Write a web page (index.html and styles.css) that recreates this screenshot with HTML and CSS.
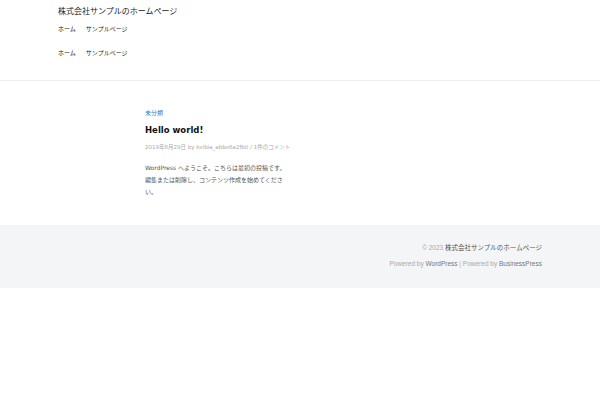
FILE: index.html
```html
<!DOCTYPE html>
<html lang="ja">
<head>
<meta charset="utf-8">
<title>Hello world!</title>
<link rel="stylesheet" href="styles.css">
</head>
<body>
<header class="site-header">
  <div class="container">
    <div class="site-title">株式会社サンプルのホームページ</div>
    <nav class="nav">
      <div class="nav-row"><a class="nav-link">ホーム</a><a class="nav-link">サンプルページ</a></div>
      <div class="nav-row"><a class="nav-link">ホーム</a><a class="nav-link">サンプルページ</a></div>
    </nav>
  </div>
</header>
<main class="site-main">
  <article class="post">
    <div class="post-cat">未分類</div>
    <h2 class="post-title">Hello world!</h2>
    <div class="post-meta">2019年6月29日 by kelbia_abbe6a2fb0 / 1件のコメント</div>
    <p class="post-excerpt">WordPress へようこそ。こちらは最初の投稿です。編集または削除し、コンテンツ作成を始めてください。</p>
  </article>
</main>
<footer class="site-footer">
  <div class="container footer-inner">
    <div class="copyright">© 2023 <span class="copy-name">株式会社サンプルのホームページ</span></div>
    <div class="powered">Powered by <span class="plink">WordPress</span> | Powered by <span class="plink">BusinessPress</span></div>
  </div>
</footer>
</body>
</html>
```
FILE: styles.css
```css
html, body {
  margin: 0;
  padding: 0;
  background: #ffffff;
}
body {
  font-family: "DejaVu Sans", "Noto Sans CJK JP", sans-serif;
  color: #333;
}
.container {
  padding: 0 58px;
}
.site-header {
  height: 80px;
  border-bottom: 1px solid #efefef;
}
.site-title {
  font-size: 8px;
  line-height: 24px;
  color: #222;
}
.nav {
  display: flex;
  flex-direction: column;
  gap: 14px;
}
.nav-row {
  display: flex;
  gap: 10px;
  line-height: 10px;
  font-size: 6px;
}
.nav-link {
  color: #222;
}
.site-main {
  height: 144px;
  padding-left: 145px;
  box-sizing: border-box;
}
.post {
  width: 145px;
  padding-top: 27px;
}
.post-cat {
  font-size: 6px;
  line-height: 10px;
  color: #2f7fc4;
}
.post-title {
  margin: 5px 0 0;
  font-size: 8.5px;
  line-height: 14px;
  font-weight: bold;
  color: #111;
}
.post-meta {
  margin-top: 5px;
  font-size: 5.5px;
  line-height: 10px;
  color: #aaa;
  white-space: nowrap;
}
.post-excerpt {
  margin: 10px 0 0;
  font-size: 6px;
  line-height: 12px;
  color: #555;
}
.site-footer {
  height: 63px;
  background: #f4f5f7;
}
.footer-inner {
  padding-top: 17px;
  text-align: right;
  font-family: "Liberation Sans", "Noto Sans CJK JP", sans-serif;
  font-size: 6.5px;
  color: #aaa;
}
.copyright {
  line-height: 12px;
}
.copy-name {
  color: #555;
}
.powered {
  margin-top: 4px;
  line-height: 12px;
}
.plink {
  color: #777;
}
```
